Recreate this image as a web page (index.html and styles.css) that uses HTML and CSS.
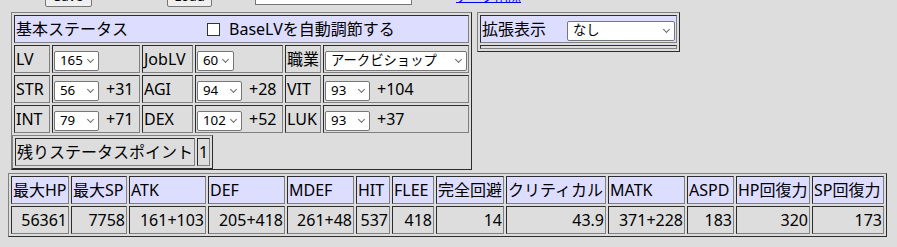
FILE: index.html
```html
<!DOCTYPE html>
<html lang="ja">
<head>
  <meta charset="UTF-8">
  <title>ステータス計算</title>
  <link rel="stylesheet" href="styles.css">
</head>
<body>
  <div class="topbar">
    <button class="file-btn save-btn">Save</button>
    <button class="file-btn load-btn">Load</button>
    <input class="file-name" type="text" value="Save1 File SaveData">
    <a class="file-del" href="#">データ削除</a>
  </div>

  <div class="top-row">
    <div class="panel">
      <table class="grid status">
        <tr>
          <td colspan="6" class="head">基本ステータス<label class="auto-lv"><input type="checkbox">BaseLVを自動調節する</label></td>
        </tr>
        <tr>
          <td class="c1">LV</td>
          <td class="c2"><span class="pick"><select class="sel-lv"><option>165</option></select></span></td>
          <td class="c3">JobLV</td>
          <td class="c4"><span class="pick"><select class="sel-job"><option>60</option></select></span></td>
          <td class="c5">職業</td>
          <td class="c6"><span class="pick"><select class="sel-class"><option>アークビショップ</option></select></span></td>
        </tr>
        <tr>
          <td>STR</td>
          <td><span class="pick"><select class="sel-stat"><option>56</option></select></span><span class="bonus">+31</span></td>
          <td>AGI</td>
          <td><span class="pick"><select class="sel-stat"><option>94</option></select></span><span class="bonus">+28</span></td>
          <td>VIT</td>
          <td><span class="pick"><select class="sel-stat"><option>93</option></select></span><span class="bonus">+104</span></td>
        </tr>
        <tr>
          <td>INT</td>
          <td><span class="pick"><select class="sel-stat"><option>79</option></select></span><span class="bonus">+71</span></td>
          <td>DEX</td>
          <td><span class="pick"><select class="sel-stat"><option>102</option></select></span><span class="bonus">+52</span></td>
          <td>LUK</td>
          <td><span class="pick"><select class="sel-stat"><option>93</option></select></span><span class="bonus">+37</span></td>
        </tr>
      </table>
      <table class="grid points">
        <tr><td>残りステータスポイント</td><td>1</td></tr>
      </table>
    </div>

    <table class="grid ext">
      <tr>
        <td class="head">拡張表示<span class="pick ext-pick"><select class="sel-ext"><option>なし</option></select></span></td>
      </tr>
      <tr><td class="spacer"></td></tr>
    </table>
  </div>

  <table class="grid result">
    <tr>
      <th class="w-hp">最大HP</th>
      <th class="w-sp">最大SP</th>
      <th class="w-atk">ATK</th>
      <th class="w-def">DEF</th>
      <th class="w-mdef">MDEF</th>
      <th class="w-hit">HIT</th>
      <th class="w-flee">FLEE</th>
      <th class="w-pd">完全回避</th>
      <th class="w-cri">クリティカル</th>
      <th class="w-matk">MATK</th>
      <th class="w-aspd">ASPD</th>
      <th class="w-hpr">HP回復力</th>
      <th class="w-spr">SP回復力</th>
    </tr>
    <tr>
      <td>56361</td>
      <td>7758</td>
      <td>161+103</td>
      <td>205+418</td>
      <td>261+48</td>
      <td>537</td>
      <td>418</td>
      <td>14</td>
      <td>43.9</td>
      <td>371+228</td>
      <td>183</td>
      <td>320</td>
      <td>173</td>
    </tr>
  </table>
</body>
</html>
```

FILE: styles.css
```css
body { margin: 0 8px; background: #dddddd; color: #000; font-family: "Noto Sans", "Noto Sans CJK JP", sans-serif; font-size: 16px; line-height: 24px; }

/* file bar, scrolled mostly out of view */
.topbar { display: flex; align-items: flex-end; height: 30px; margin-top: -23px; padding-left: 37px; }
.file-btn { font: 13.33px "Noto Sans", sans-serif; height: 22px; padding: 0; background: #efefef; border: 1px solid #767676; border-radius: 2px; }
.save-btn { width: 47px; }
.load-btn { width: 45px; margin-left: 75px; }
.file-name { font: 13.33px "Noto Sans", sans-serif; width: 157px; height: 20px; box-sizing: border-box; margin: 0 0 2px 43px; padding: 0 2px; border: 1px solid #767676; background: #fff; }
.file-del { font-size: 13px; line-height: 16px; margin: 0 0 3px 44px; color: #0000ee; }

.top-row { display: flex; align-items: flex-start; gap: 5px; margin: 5px 0 0 3px; }

/* tables drawn like border=1 */
.grid { border-spacing: 2px; }
.grid td, .grid th { border: 1px inset gray; padding: 1px; font-weight: normal; white-space: nowrap; }
.head, .grid th { background: #ddddff; text-align: left; }

.panel { border: 1px outset gray; }
.status { border: 0; }
.status td { height: 24px; }
.c1 { width: 32px; }
.c2 { width: 84px; }
.c3 { width: 47px; }
.c4 { width: 84px; }
.c5 { width: 32px; }
.c6 { width: 140px; }

/* select boxes with a chevron */
.pick { position: relative; display: inline-block; vertical-align: middle; line-height: 0; }
.pick::after { content: ""; position: absolute; right: 6px; top: 6px; width: 4px; height: 4px; border-right: 1.5px solid #6b6b6b; border-bottom: 1.5px solid #6b6b6b; transform: rotate(45deg); pointer-events: none; }
select { appearance: none; -webkit-appearance: none; font: 13.33px "Noto Sans", "Noto Sans CJK JP", sans-serif; line-height: 17px; height: 20px; margin: 0; padding: 0 14px 0 5px; background: #fff; color: #000; border: 1px solid #767676; border-radius: 2px; box-sizing: border-box; }
.sel-lv { width: 45px; }
.sel-job { width: 37px; }
.sel-stat { width: 45px; }
.sel-class { width: 142px; }
.ext-pick { margin-left: 21px; }
.sel-ext { width: 108px; }
.bonus { margin-left: 7px; }

.auto-lv { margin-left: 79px; }
.auto-lv input { appearance: none; -webkit-appearance: none; width: 13px; height: 13px; margin: 0 9px 0 0; box-sizing: border-box; border: 1px solid #333; background: #fff; border-radius: 0; vertical-align: -1px; }

.points { border: 1px outset gray; }
.points td { height: 24px; }

.ext { border: 1px outset gray; }
.ext .head { height: 24px; }
.ext .spacer { height: 0; padding: 1px; line-height: 0; }

.result { border: 1px outset gray; margin-top: 3px; }
.result td { text-align: right; height: 24px; }
.w-hp { width: 54px; }
.w-sp { width: 52px; }
.w-atk { width: 73px; }
.w-def { width: 73px; }
.w-mdef { width: 63px; }
.w-hit { width: 30px; }
.w-flee { width: 38px; }
.w-pd { width: 64px; }
.w-cri { width: 96px; }
.w-matk { width: 73px; }
.w-aspd { width: 43px; }
.w-hpr { width: 70px; }
.w-spr { width: 68px; }
```
